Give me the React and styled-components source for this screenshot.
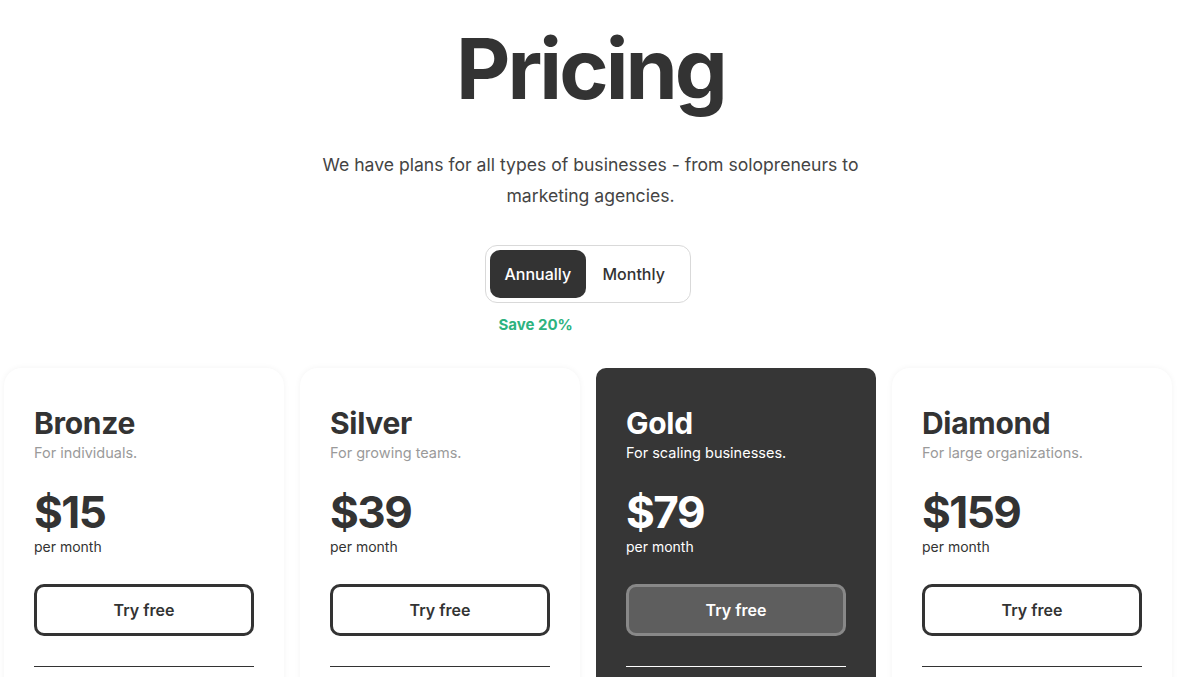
import React from 'react'
import styled, { createGlobalStyle } from 'styled-components'

const Global = createGlobalStyle`
  html, body { margin: 0; padding: 0; background: #fff; }
  body { font-family: 'Inter', 'Liberation Sans', sans-serif; color: #333; overflow: hidden; }
  * { box-sizing: border-box; }
`

const plans = [
  { name: 'Bronze', note: 'For individuals.', price: '$15' },
  { name: 'Silver', note: 'For growing teams.', price: '$39' },
  { name: 'Gold', note: 'For scaling businesses.', price: '$79', dark: true },
  { name: 'Diamond', note: 'For large organizations.', price: '$159' },
]

function App() {
  return (
    <>
      <Global />
      <Page>
        <Title>Pricing</Title>
        <Lead>We have plans for all types of businesses - from solopreneurs to marketing agencies.</Lead>
        <ToggleWrap>
          <Toggle>
            <ToggleBtn $active>Annually</ToggleBtn>
            <ToggleBtn>Monthly</ToggleBtn>
          </Toggle>
          <Save>Save 20%</Save>
        </ToggleWrap>
        <Cards>
          {plans.map(p => (
            <Card key={p.name} $dark={p.dark}>
              <PlanName>{p.name}</PlanName>
              <PlanNote $dark={p.dark}>{p.note}</PlanNote>
              <Price>{p.price}</Price>
              <Per>per month</Per>
              <TryBtn $dark={p.dark}>Try free</TryBtn>
              <Divider $dark={p.dark} />
            </Card>
          ))}
        </Cards>
      </Page>
    </>
  )
}

const Page = styled.div`
  display: flex;
  flex-direction: column;
  align-items: center;
  padding-top: 23px;
`

const Title = styled.h1`
  margin: 0;
  font-size: 84px;
  line-height: 92px;
  font-weight: 700;
  letter-spacing: -0.035em;
  color: #333;
`

const Lead = styled.p`
  margin: 34px 0 0;
  width: 560px;
  text-align: center;
  font-size: 17.6px;
  line-height: 31px;
  color: #444;
`

const ToggleWrap = styled.div`
  margin: 34px 6px 0 0;
  display: flex;
  flex-direction: column;
  align-items: flex-start;
`

const Toggle = styled.div`
  display: flex;
  padding: 4px;
  width: 206px;
  height: 58px;
  border: 1px solid #d9d9d9;
  border-radius: 12px;
`

const ToggleBtn = styled.button`
  border: 0;
  font-family: inherit;
  font-size: 16px;
  font-weight: 500;
  height: 48px;
  padding: 0 15px;
  border-radius: 10px;
  background: ${p => (p.$active ? '#333' : 'transparent')};
  color: ${p => (p.$active ? '#fff' : '#333')};
  min-width: 95px;
`

const Save = styled.div`
  margin: 12px 0 0 14px;
  font-size: 15px;
  font-weight: 700;
  color: #2db37f;
`

const Cards = styled.div`
  align-self: stretch;
  display: grid;
  grid-template-columns: repeat(4, 280px);
  gap: 16px;
  padding-left: 4px;
  margin-top: 34px;
`

const Card = styled.div`
  height: 340px;
  padding: 37px 30px 0;
  background: ${p => (p.$dark ? '#363636' : '#fff')};
  color: ${p => (p.$dark ? '#fff' : '#333')};
  box-shadow: ${p => (p.$dark ? 'none' : '0 0 6px rgba(0,0,0,0.05)')};
  border-radius: ${p => (p.$dark ? '10px' : '18px')};
`

const PlanName = styled.div`
  font-size: 30px;
  line-height: 36px;
  font-weight: 700;
  letter-spacing: -0.01em;
`

const PlanNote = styled.div`
  margin-top: 2px;
  font-size: 14.5px;
  line-height: 20px;
  color: ${p => (p.$dark ? '#fff' : '#9a9a9a')};
`

const Price = styled.div`
  margin-top: 24px;
  font-size: 44px;
  line-height: 50px;
  font-weight: 700;
  letter-spacing: -0.035em;
`

const Per = styled.div`
  margin-top: 1px;
  font-size: 14px;
  line-height: 18px;
`

const TryBtn = styled.button`
  margin-top: 28px;
  width: 220px;
  height: 52px;
  border-radius: 10px;
  font-family: inherit;
  font-size: 16px;
  font-weight: 600;
  border: 3px solid ${p => (p.$dark ? '#888' : '#333')};
  background: ${p => (p.$dark ? '#5e5e5e' : '#fff')};
  color: ${p => (p.$dark ? '#fff' : '#333')};
`

const Divider = styled.div`
  margin-top: 30px;
  width: 220px;
  height: 1px;
  background: ${p => (p.$dark ? '#fff' : '#333')};
`

export default App
